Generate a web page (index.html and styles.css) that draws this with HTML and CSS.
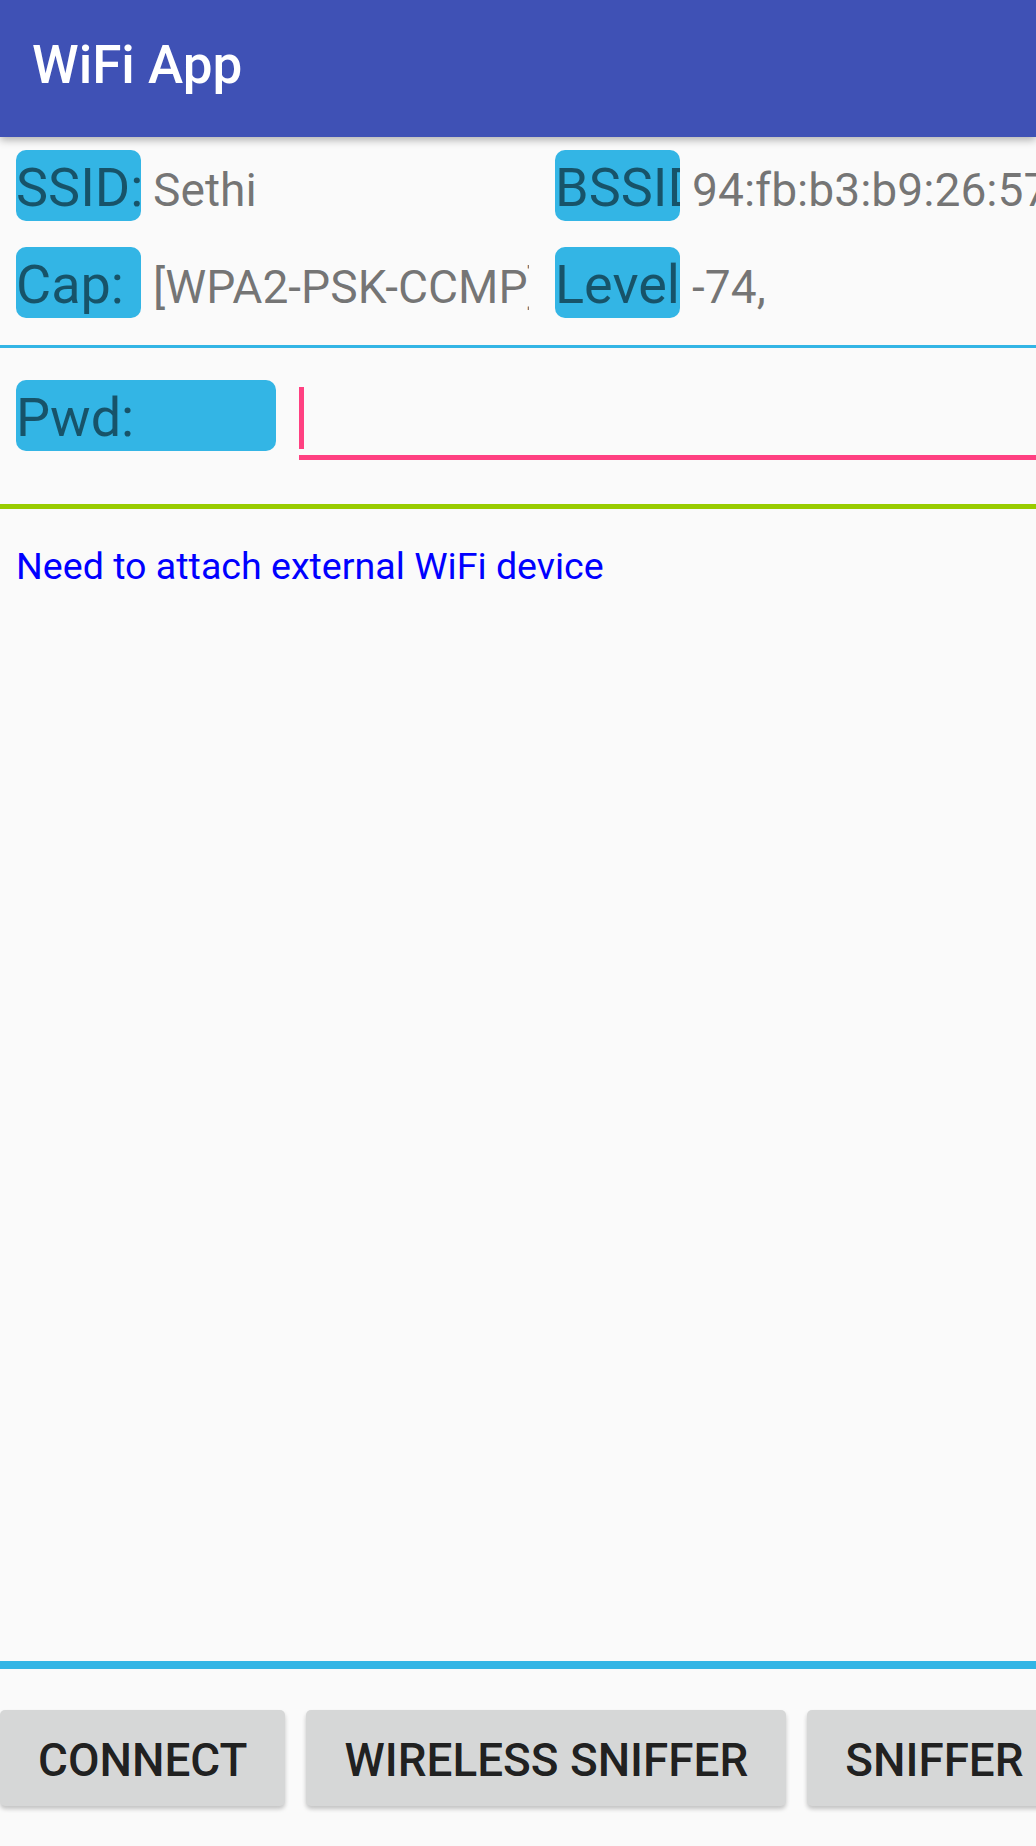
FILE: index.html
```html
<!DOCTYPE html>
<html lang="en">
  <head>
    <meta charset="UTF-8" />
    <meta name="viewport" content="width=device-width, initial-scale=1.0" />
    <title>WiFi App</title>

    <link rel="stylesheet" href="styles.css">
  </head>
  <body>
    <div class="screen">
      <header class="appbar">
        <h1>WiFi App</h1>
      </header>

      <main class="content">
        <div class="info">
          <div class="info-row">
            <div class="pair pair-first">
              <span class="tag">SSID:</span>
              <span class="value">Sethi</span>
            </div>
            <div class="pair">
              <span class="tag">BSSID:</span>
              <span class="value">94:fb:b3:b9:26:57</span>
            </div>
          </div>
          <div class="info-row">
            <div class="pair pair-first">
              <span class="tag">Cap: </span>
              <span class="value">[WPA2-PSK-CCMP][ESS]</span>
            </div>
            <div class="pair">
              <span class="tag">Level</span>
              <span class="value">-74,</span>
            </div>
          </div>
        </div>

        <div class="line line_blue"></div>

        <div class="pwd_row">
          <span class="tag tag_wide">Pwd:</span>
          <div class="pwd_field"><span class="caret"></span></div>
        </div>

        <div class="line line_green"></div>

        <p class="status">Need to attach external WiFi device</p>
      </main>

      <div class="line line_bottom"></div>

      <div class="actions">
        <button class="btn">Connect</button>
        <button class="btn">Wireless Sniffer</button>
        <button class="btn">Sniffer</button>
      </div>
    </div>
  </body>
</html>
```

FILE: styles.css
```css
* {
  margin: 0;
  padding: 0;
  box-sizing: border-box;
}

body {
  background-color: #fafafa;
  font-family: Roboto, "Noto Sans", sans-serif;
  overflow: hidden;
}

.screen {
  width: 100%;
  height: 100vh;
  display: flex;
  flex-direction: column;
  overflow: hidden;
}

.appbar {
  height: 137px;
  flex-shrink: 0;
  padding: 34px 0 0 32px;
  background-color: #3f51b5;
  box-shadow: 0 3px 8px rgba(0, 0, 0, 0.3);
  position: relative;
  z-index: 1;

  h1 {
    color: #fff;
    font-size: 53px;
    font-weight: 500;
    line-height: normal;
  }
}

.content {
  flex: 1;
  display: flex;
  flex-direction: column;
}

.info {
  display: flex;
  flex-direction: column;
  gap: 26px;
  padding: 13px 0 0 16px;
}

.info-row {
  display: flex;
  gap: 26px;
}

.pair {
  display: flex;
  align-items: baseline;
  gap: 12px;
  min-width: 0;
  flex: 1;
  overflow: hidden;
}

.pair-first {
  flex: 0 0 513px;
}

.tag {
  flex-shrink: 0;
  width: 125px;
  height: 71px;
  padding-top: 4px;
  line-height: 67px;
  font-size: 54px;
  color: rgba(0, 0, 0, 0.54);
  background-color: #33b5e5;
  border-radius: 10px;
  white-space: pre;
  overflow: hidden;
}

.tag_wide {
  width: 260px;
}

.value {
  flex: 1;
  min-width: 0;
  font-size: 46.2px;
  color: rgba(0, 0, 0, 0.54);
  white-space: nowrap;
  overflow: hidden;
}

.line {
  flex-shrink: 0;
}

.line_blue {
  height: 3px;
  margin-top: 27px;
  background-color: #33b5e5;
}

.pwd_row {
  display: flex;
  align-items: flex-start;
  gap: 23px;
  padding: 32px 0 0 16px;
}

.pwd_field {
  flex: 1;
  padding: 7px 0 6px;
  border-bottom: 5px solid #ff4081;

  .caret {
    display: block;
    width: 5px;
    height: 62px;
    background-color: #ff4081;
  }
}

.line_green {
  height: 5px;
  margin-top: 44px;
  background-color: #99cc00;
}

.status {
  padding: 35px 0 0 16px;
  font-size: 37.6px;
  color: #0000ff;
}

.line_bottom {
  height: 8px;
  background-color: #33b5e5;
}

.actions {
  flex-shrink: 0;
  display: flex;
  gap: 21px;
  padding: 41px 0 40px;
}

.btn {
  flex-shrink: 0;
  height: 96px;
  padding: 6px 38px 0;
  line-height: 90px;
  font-family: Roboto, "Noto Sans", sans-serif;
  font-size: 45.8px;
  font-weight: 500;
  text-transform: uppercase;
  color: rgba(0, 0, 0, 0.87);
  background-color: #d6d7d7;
  border: none;
  border-radius: 5px;
  box-shadow: 0 3px 4px rgba(0, 0, 0, 0.22);
}
```
